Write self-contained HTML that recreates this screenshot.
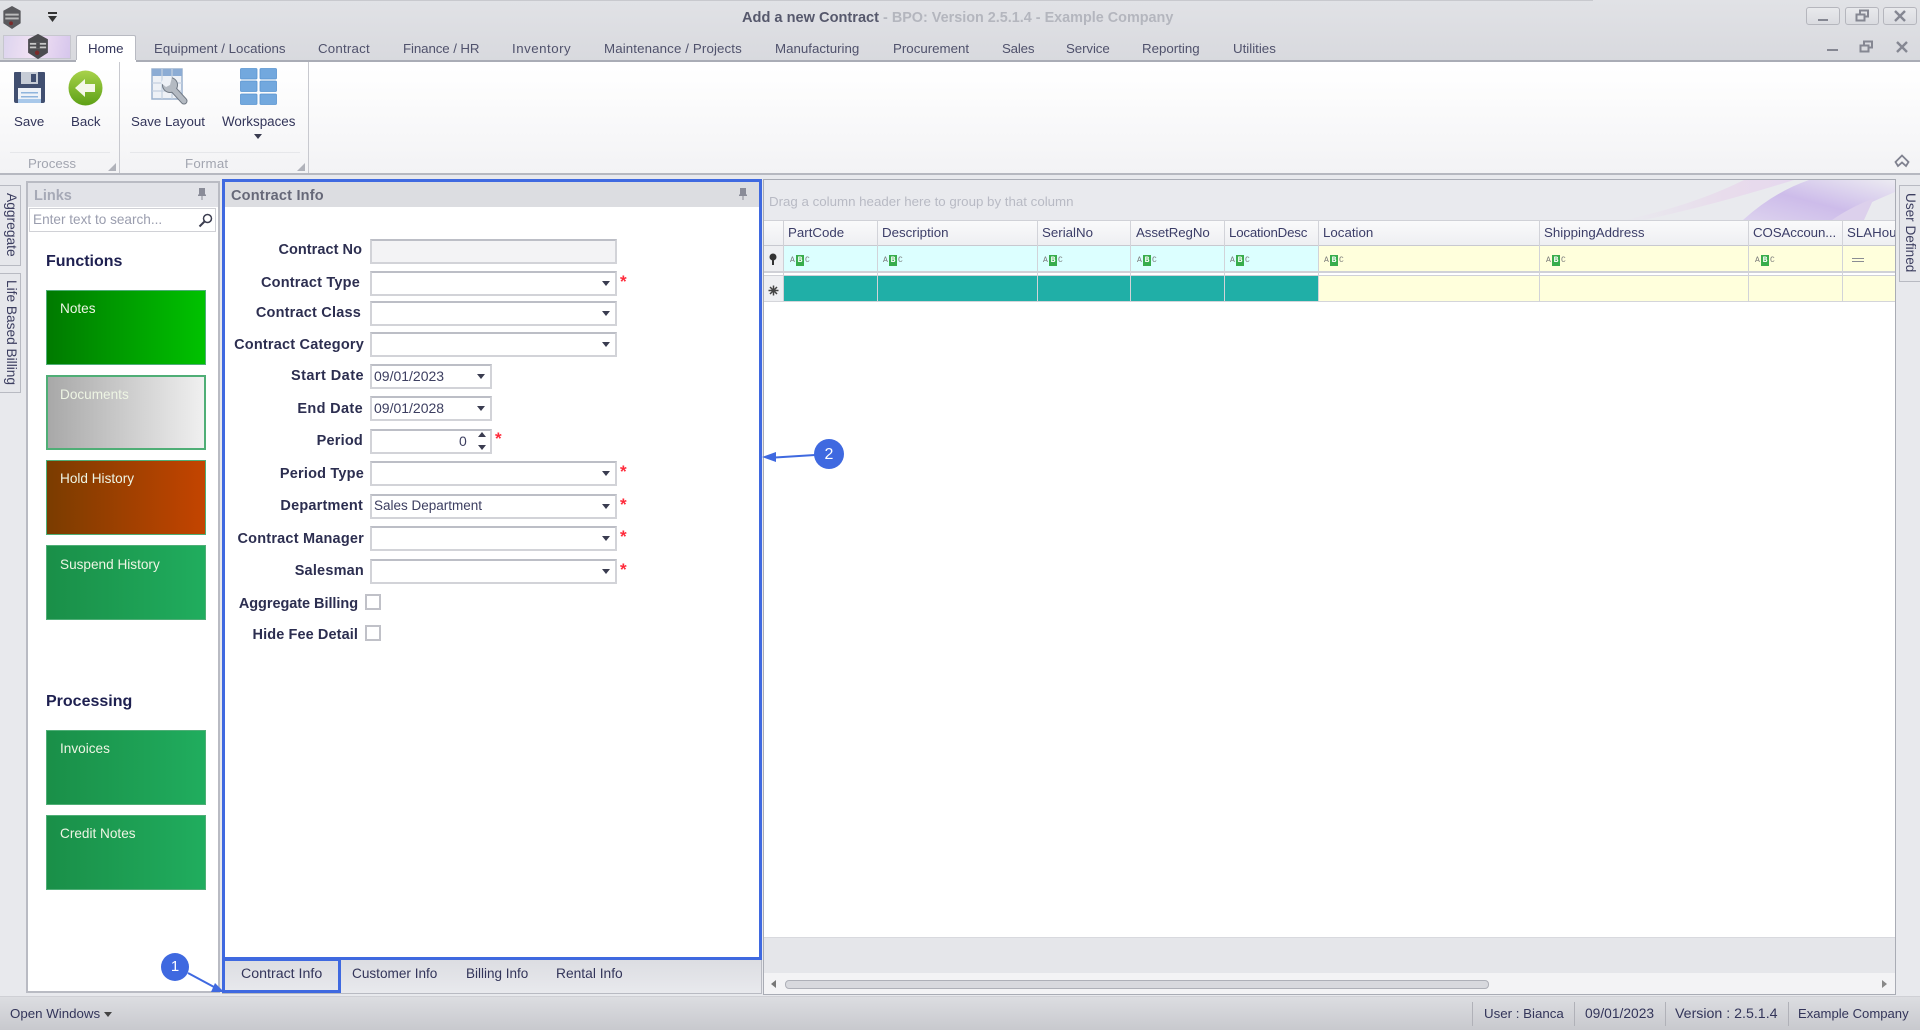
<!DOCTYPE html>
<html><head><meta charset="utf-8"><title>Add a new Contract</title>
<style>
html,body{margin:0;padding:0;width:1920px;height:1030px;overflow:hidden;background:#e8e9ed}
#r{position:absolute;left:0;top:0;width:1920px;height:1030px;overflow:hidden;font-family:"Liberation Sans",sans-serif;font-size:13.3px;color:#33355a;filter:blur(.35px);background:#e8e9ed}
#r div,#r span.t,#r svg{position:absolute}
.t{position:absolute;white-space:nowrap;line-height:16px;height:16px}
.tab{color:#50526c}
.l{font-weight:bold;font-size:14.5px;letter-spacing:.2px;color:#2c2e50;text-align:right;width:160px;left:203px}
.i{box-sizing:border-box;background:#fff;border:2px solid #d2d3d8;border-top-color:#bcbec6;left:370px;width:247px;height:25px}
.d{left:370px;width:122px}
.ar{width:0;height:0;border-left:4.5px solid transparent;border-right:4.5px solid transparent;border-top:5px solid #3a3c50}
.st{color:#ff2a3a;font-weight:bold;font-size:17px}
.v{font-size:14px;color:#3c3e60}
.tile{box-sizing:border-box;left:46px;width:160px;border:1px solid #4fae76}
.tt{color:#eef5e4;font-size:13.6px;left:60px}
.h{color:#3c3e68;top:225px}
.hd{top:220px;height:26px;width:1px;background:#cfd0d6}
.vl{width:1px;background:#cfd0d6}
.abc{top:255px;height:11px;width:26px}
.abc b{position:absolute;left:6px;top:0;width:8px;height:11px;background:#38ad4c;color:#fff;font:bold 8px/11px "Liberation Mono",monospace;text-align:center}
.abc i{position:absolute;top:1px;font:normal 8px/9px "Liberation Mono",monospace;color:#777}
.sep{top:1002px;width:1px;height:24px;background:#b0b1b8}
.wb{box-sizing:border-box;top:7px;height:18px;border:1px solid #b5b6bd;border-radius:3px;background:linear-gradient(#e8e9ec,#dadbe0)}
</style></head><body><div id="r">

<!-- title bar -->
<div style="left:0;top:0;width:1920px;height:61px;background:linear-gradient(#e1e2e6,#d8d9de)"></div>
<div style="left:0;top:0;width:1593px;height:1px;background:#c8c9ce"></div>
<svg style="left:1px;top:5px" width="22" height="25" viewBox="0 0 22 26"><polygon points="11,1 20,6 20,19 11,25 2,19 2,6" fill="#5a5a5e"/><rect x="4" y="9" width="14" height="2" fill="#bbb"/><rect x="4" y="13" width="14" height="2" fill="#bbb"/><circle cx="10" cy="19" r="2" fill="#7a2a2a"/></svg>
<svg style="left:47px;top:12px" width="12" height="11" viewBox="0 0 12 11"><rect x="1" y="0" width="9" height="2" fill="#333"/><polygon points="1,4 10,4 5.5,10" fill="#333"/></svg>
<span class="t" style="left:742px;top:10px;font-weight:bold;font-size:14.6px;color:#56586c">Add a new Contract<span style="color:#b4b6be;font-size:14.4px"> - BPO: Version 2.5.1.4 - Example Company</span></span>

<div class="wb" style="left:1806px;width:34px"></div><div style="left:1818px;top:19px;width:10px;height:2px;background:#858792"></div>
<div class="wb" style="left:1845px;width:34px"></div><svg style="left:1855px;top:9px" width="15" height="14" viewBox="0 0 15 14" fill="none" stroke="#858792" stroke-width="2"><rect x="5" y="1.5" width="8" height="6"/><rect x="1.5" y="5.5" width="8" height="6" fill="#e0e1e5"/></svg>
<div class="wb" style="left:1883px;width:34px"></div><svg style="left:1894px;top:10px" width="12" height="12" viewBox="0 0 12 12" stroke="#858792" stroke-width="2.4"><path d="M1 1L11 11M11 1L1 11"/></svg>

<div style="left:1827px;top:49px;width:11px;height:2px;background:#858792"></div>
<svg style="left:1859px;top:40px" width="15" height="14" viewBox="0 0 15 14" fill="none" stroke="#858792" stroke-width="2"><rect x="5" y="1.5" width="8" height="6"/><rect x="1.5" y="5.5" width="8" height="6" fill="#dadbdf"/></svg>
<svg style="left:1896px;top:41px" width="12" height="12" viewBox="0 0 12 12" stroke="#858792" stroke-width="2.4"><path d="M1 1L11 11M11 1L1 11"/></svg>

<!-- app button + tabs -->
<div style="left:3px;top:35px;width:68px;height:24px;background:linear-gradient(100deg,#dcd4ee,#f2e2f4 45%,#d6c6ec);border:1px solid #c6c7ce;box-sizing:border-box"></div>
<svg style="left:26px;top:33px" width="24" height="27" viewBox="0 0 26 30"><polygon points="13,1 24,7 24,22 13,29 2,22 2,7" fill="#4c4c50"/><rect x="4" y="11" width="18" height="2" fill="#c8c8c8"/><rect x="4" y="15" width="18" height="2" fill="#c8c8c8"/><rect x="11" y="11" width="4" height="6" fill="#4c4c50"/><circle cx="12" cy="22" r="2.5" fill="#7a2a2a"/></svg>
<div style="left:0;top:60px;width:1920px;height:2px;background:#aaadb6"></div>
<div style="left:76px;top:35px;width:60px;height:27px;background:#fff;border:1px solid #b8bac2;border-bottom:0;box-sizing:border-box;border-radius:2px 2px 0 0"></div>
<span class="t" style="left:88px;top:41px;color:#33355a">Home</span>
<span class="t tab" style="left:154px;top:41px">Equipment / Locations</span>
<span class="t tab" style="left:318px;top:41px;letter-spacing:.2px">Contract</span>
<span class="t tab" style="left:403px;top:41px;letter-spacing:-.1px">Finance / HR</span>
<span class="t tab" style="left:512px;top:41px;letter-spacing:.5px">Inventory</span>
<span class="t tab" style="left:604px;top:41px;letter-spacing:.12px">Maintenance / Projects</span>
<span class="t tab" style="left:775px;top:41px">Manufacturing</span>
<span class="t tab" style="left:893px;top:41px">Procurement</span>
<span class="t tab" style="left:1002px;top:41px;letter-spacing:-.2px">Sales</span>
<span class="t tab" style="left:1066px;top:41px;letter-spacing:-.1px">Service</span>
<span class="t tab" style="left:1142px;top:41px">Reporting</span>
<span class="t tab" style="left:1233px;top:41px">Utilities</span>

<!-- ribbon -->
<div style="left:0;top:62px;width:1920px;height:111px;background:linear-gradient(#fff 5%,#f3f3f5)"></div>
<div style="left:0;top:173px;width:1920px;height:2px;background:#b6b8c0"></div>
<div style="left:136px;top:60px;width:1784px;height:2px;background:#aaadb6"></div>
<div style="left:76px;top:60px;width:60px;height:3px;background:#fff"></div>
<div style="left:119px;top:62px;width:1px;height:111px;background:#c8c9cf"></div>
<div style="left:308px;top:62px;width:1px;height:111px;background:#c8c9cf"></div>
<div style="left:10px;top:152px;width:100px;height:1px;background:#e6e7ea"></div>
<div style="left:130px;top:152px;width:170px;height:1px;background:#e6e7ea"></div>
<span class="t" style="left:28px;top:156px;color:#a2a5b0">Process</span>
<span class="t" style="left:185px;top:156px;color:#a2a5b0;letter-spacing:.2px">Format</span>
<svg style="left:108px;top:163px" width="8" height="8"><polygon points="8,0 8,8 0,8" fill="#b0b2ba"/></svg>
<svg style="left:297px;top:163px" width="8" height="8"><polygon points="8,0 8,8 0,8" fill="#b0b2ba"/></svg>
<svg style="left:1894px;top:154px" width="16" height="14" viewBox="0 0 16 14" fill="none" stroke="#808290" stroke-width="1.8"><path d="M1.5 8L8 1.5L14.500 8L12 12L8 8.500L4 12Z"/></svg>

<!-- save icon -->
<svg style="left:13px;top:71px" width="33" height="33" viewBox="0 0 33 33"><path d="M1 2q0-1 1-1h29q1 0 1 1v28q0 2-2 2H3q-2 0-2-2z" fill="#414f70"/><rect x="8" y="1" width="17" height="12" fill="#c6ccd6"/><rect x="18" y="3" width="5" height="8" fill="#414f70"/><rect x="5" y="17" width="23" height="15" fill="#eef2f8"/><rect x="8" y="21" width="17" height="1.500" fill="#8fb4dc"/><rect x="8" y="25" width="17" height="1.500" fill="#8fb4dc"/><rect x="5" y="28" width="23" height="4" fill="#a8c8ea"/></svg>
<span class="t" style="left:14px;top:114px;font-size:13.3px">Save</span>
<!-- back icon -->
<svg style="left:68px;top:70px" width="35" height="36" viewBox="0 0 35 36"><defs><linearGradient id="g" x1="0" y1="0" x2="0" y2="1"><stop offset="0" stop-color="#a8d24a"/><stop offset="1" stop-color="#5da016"/></linearGradient></defs><ellipse cx="17.500" cy="18" rx="17" ry="17.500" fill="url(#g)"/><path d="M7 18L17 9v5h10v8H17v5z" fill="#f4f8e8"/></svg>
<span class="t" style="left:71px;top:114px;font-size:13.3px">Back</span>
<!-- save layout icon -->
<svg style="left:151px;top:68px" width="38" height="38" viewBox="0 0 38 38"><rect x="1" y="1" width="30" height="30" fill="#eef1f6" stroke="#9cb2ce" stroke-width="1.500"/><rect x="1" y="1" width="30" height="7" fill="#8cacd4"/><path d="M11 1v30M21 1v30M1 15h30M1 23h30" stroke="#c4d0e0" stroke-width="1.200"/>
<path d="M22 21L33 33" stroke="#6f7782" stroke-width="7" stroke-linecap="round"/><circle cx="19" cy="17" r="8" fill="#6f7782"/><path d="M22 21L33 33" stroke="#b4bac2" stroke-width="5" stroke-linecap="round"/><circle cx="19" cy="17" r="7" fill="#b4bac2"/><polygon points="13,9 21,9 19,17 15,19 10,15" fill="#eef1f6"/></svg>
<span class="t" style="left:131px;top:114px;font-size:13.3px">Save Layout</span>
<!-- workspaces icon -->
<svg style="left:240px;top:68px" width="37" height="37" viewBox="0 0 37 37"><g fill="#72a8de" stroke="#5a94d0" stroke-width=".8"><rect x=".5" y=".5" width="16.500" height="10.500" rx="1"/><rect x="20" y=".5" width="16.500" height="10.500" rx="1"/><rect x=".5" y="13" width="16.500" height="10.500" rx="1"/><rect x="20" y="13" width="16.500" height="10.500" rx="1"/><rect x=".5" y="26" width="16.500" height="10.500" rx="1"/><rect x="20" y="26" width="16.500" height="10.500" rx="1"/></g></svg>
<span class="t" style="left:222px;top:114px;font-size:13.4px">Workspaces</span>
<div class="ar" style="left:254px;top:134px"></div>

<!-- left side tabs -->
<div style="box-sizing:border-box;left:0;top:185px;width:21px;height:81px;border:1px solid #b8bac2;border-left:0;background:#e6e7eb"></div>
<div style="box-sizing:border-box;left:0;top:273px;width:21px;height:120px;border:1px solid #b8bac2;border-left:0;background:#e6e7eb"></div>
<span class="t" style="left:3px;top:193px;writing-mode:vertical-rl;height:auto;width:16px;color:#3c3e60;font-size:13.8px">Aggregate</span>
<span class="t" style="left:3px;top:280px;writing-mode:vertical-rl;height:auto;width:16px;color:#3c3e60;font-size:13.7px">Life Based Billing</span>

<!-- links panel -->
<div style="box-sizing:border-box;left:26px;top:181px;width:194px;height:812px;background:#fff;border:2px solid #b9bbc3"></div>
<div style="left:28px;top:183px;width:190px;height:24px;background:#e2e3e8"></div>
<span class="t" style="left:34px;top:188px;font-weight:bold;font-size:14.500px;color:#a6a9b6">Links</span>
<svg style="left:197px;top:187px" width="10" height="14" viewBox="0 0 10 14"><path d="M2 1h6v6l1 1v1H1V8l1-1z M4.500 9h1v4h-1z" fill="#8a8c98"/></svg>
<div style="box-sizing:border-box;left:29px;top:208px;width:187px;height:24px;background:#fff;border:1px solid #d0d1d6"></div>
<span class="t" style="left:33px;top:212px;font-size:13.600px;color:#9a9dae">Enter text to search...</span>
<svg style="left:198px;top:213px" width="15" height="15" viewBox="0 0 15 15" fill="none" stroke="#3c3e50" stroke-width="1.500"><circle cx="9.500" cy="5.500" r="4"/><path d="M6.500 8.500L1.500 13.500" stroke-width="2"/></svg>
<span class="t" style="left:46px;top:254px;font-weight:bold;font-size:16px;color:#1e2050">Functions</span>
<div class="tile" style="top:290px;height:75px;background:linear-gradient(90deg,#007a00,#00c200)"></div>
<span class="t tt" style="top:301px">Notes</span>
<div class="tile" style="top:375px;height:75px;border-width:2px;background:linear-gradient(90deg,#a8a8a8,#f0f0f0)"></div>
<span class="t tt" style="top:387px">Documents</span>
<div class="tile" style="top:460px;height:75px;background:linear-gradient(90deg,#7a3c00,#c44400)"></div>
<span class="t tt" style="top:471px">Hold History</span>
<div class="tile" style="top:545px;height:75px;background:linear-gradient(90deg,#1a8f48,#20ad5e)"></div>
<span class="t tt" style="top:557px">Suspend History</span>
<span class="t" style="left:46px;top:694px;font-weight:bold;font-size:16px;color:#1e2050">Processing</span>
<div class="tile" style="top:730px;height:75px;background:linear-gradient(90deg,#1a8f48,#20ad5e)"></div>
<span class="t tt" style="top:741px">Invoices</span>
<div class="tile" style="top:815px;height:75px;background:linear-gradient(90deg,#1a8f48,#20ad5e)"></div>
<span class="t tt" style="top:826px">Credit Notes</span>

<!-- contract panel -->
<div style="box-sizing:border-box;left:222px;top:179px;width:540px;height:815px;background:#fff"></div>
<div style="left:225px;top:182px;width:534px;height:25px;background:#dcdde1"></div>
<span class="t" style="left:231px;top:188px;font-weight:bold;font-size:14.500px;letter-spacing:.2px;color:#666878">Contract Info</span>
<svg style="left:738px;top:187px" width="10" height="14" viewBox="0 0 10 14"><path d="M2 1h6v6l1 1v1H1V8l1-1z M4.500 9h1v4h-1z" fill="#8a8c98"/></svg>

<span class="t l" style="top:242px;left:202px;letter-spacing:.05px">Contract No</span><div class="i" style="top:239px;background:#f3f3f5"></div>
<span class="t l" style="top:275px;left:200px">Contract Type</span><div class="i" style="top:271px"></div><div class="ar" style="left:602px;top:281px"></div><span class="t st" style="left:620px;top:274px">*</span>
<span class="t l" style="top:305px;left:201px">Contract Class</span><div class="i" style="top:301px"></div><div class="ar" style="left:602px;top:311px"></div>
<span class="t l" style="top:337px;left:204px">Contract Category</span><div class="i" style="top:332px"></div><div class="ar" style="left:602px;top:342px"></div>
<span class="t l" style="top:368px;left:204px;letter-spacing:.45px">Start Date</span><div class="i d" style="top:364px"></div><span class="t v" style="left:374px;top:368px">09/01/2023</span><div class="ar" style="left:477px;top:374px"></div>
<span class="t l" style="top:401px;left:203px;letter-spacing:.35px">End Date</span><div class="i d" style="top:396px"></div><span class="t v" style="left:374px;top:400px">09/01/2028</span><div class="ar" style="left:477px;top:406px"></div>
<span class="t l" style="top:433px;left:203px">Period</span><div class="i d" style="top:429px"></div><span class="t v" style="left:459px;top:433px">0</span>
<svg style="left:477px;top:431px" width="10" height="20"><polygon points="5,1 9,6 1,6" fill="#3a3c50"/><polygon points="5,19 9,14 1,14" fill="#3a3c50"/></svg><span class="t st" style="left:495px;top:431px">*</span>
<span class="t l" style="top:466px;left:204px">Period Type</span><div class="i" style="top:461px"></div><div class="ar" style="left:602px;top:471px"></div><span class="t st" style="left:620px;top:464px">*</span>
<span class="t l" style="top:498px;left:203px">Department</span><div class="i" style="top:494px"></div><span class="t v" style="left:374px;top:498px;font-size:13.500px">Sales Department</span><div class="ar" style="left:602px;top:504px"></div><span class="t st" style="left:620px;top:497px">*</span>
<span class="t l" style="top:531px;left:204px">Contract Manager</span><div class="i" style="top:526px"></div><div class="ar" style="left:602px;top:536px"></div><span class="t st" style="left:620px;top:529px">*</span>
<span class="t l" style="top:563px;left:204px">Salesman</span><div class="i" style="top:559px"></div><div class="ar" style="left:602px;top:569px"></div><span class="t st" style="left:620px;top:562px">*</span>
<span class="t l" style="top:596px;left:198px;letter-spacing:-.05px">Aggregate Billing</span><div class="i" style="left:365px;top:594px;width:16px;height:16px;border-color:#c0c1c8"></div>
<span class="t l" style="top:627px;left:198px;letter-spacing:.1px">Hide Fee Detail</span><div class="i" style="left:365px;top:625px;width:16px;height:16px;border-color:#c0c1c8"></div>

<div style="left:222px;top:960px;width:540px;height:33px;background:linear-gradient(#dcdde2,#e8e9ed)"></div>
<span class="t" style="left:241px;top:966px;font-size:14.2px">Contract Info</span>
<span class="t" style="left:352px;top:966px;font-size:13.6px">Customer Info</span>
<span class="t" style="left:466px;top:966px;font-size:13.5px">Billing Info</span>
<span class="t" style="left:556px;top:966px;font-size:13.8px">Rental Info</span>
<div style="left:761px;top:960px;width:1px;height:33px;background:#b8bac2"></div>
<div style="left:222px;top:993px;width:540px;height:1px;background:#b8bac2"></div>

<!-- grid -->
<div style="box-sizing:border-box;left:763px;top:179px;width:1133px;height:816px;background:#fff;border:1px solid #a9acb5"></div>
<div style="left:764px;top:180px;width:1131px;height:40px;background:#e9eaee;overflow:hidden">
<svg style="left:0;top:0" width="1131" height="40"><defs><linearGradient id="p" x1="0" y1="0" x2="1" y2="0"><stop offset="0" stop-color="#e9eaee"/><stop offset=".6" stop-color="#e8dcec"/><stop offset="1" stop-color="#e6d8ee"/></linearGradient><linearGradient id="q" x1="0" y1="1" x2="1" y2="0"><stop offset="0" stop-color="#dcd2ee"/><stop offset=".45" stop-color="#cdbcea"/><stop offset="1" stop-color="#ecebf2"/></linearGradient></defs>
<path d="M880 40Q950 25 1030 0H980Q930 25 860 40Z" fill="url(#p)"/><path d="M979 40Q1010 12 1045 0H1131V12Q1100 25 1070 40Z" fill="url(#q)"/><path d="M1068 40Q1085 28 1110 18L1100 40Z" fill="#dcd0ec"/></svg></div>
<span class="t" style="left:769px;top:194px;color:#b8bac4;font-size:13.300px">Drag a column header here to group by that column</span>

<div style="left:764px;top:220px;width:1131px;height:26px;background:linear-gradient(#fafafb,#eeeff2);border-top:1px solid #d0d1d7;box-sizing:border-box;border-bottom:1px solid #c8c9d0"></div>
<div style="left:764px;top:246px;width:19px;height:56px;background:#eeeff2"></div>
<span class="t h" style="left:788px">PartCode</span>
<span class="t h" style="left:882px">Description</span>
<span class="t h" style="left:1042px">SerialNo</span>
<span class="t h" style="left:1136px;letter-spacing:-.1px">AssetRegNo</span>
<span class="t h" style="left:1229px;letter-spacing:-.2px">LocationDesc</span>
<span class="t h" style="left:1323px">Location</span>
<span class="t h" style="left:1544px">ShippingAddress</span>
<span class="t h" style="left:1753px;letter-spacing:-.1px">COSAccoun...</span>
<div style="left:1847px;top:225px;width:48px;height:16px;overflow:hidden;white-space:nowrap;line-height:16px;color:#3c3e68">SLAHours</div>

<div style="left:783px;top:246px;width:535px;height:26px;background:#dcffff"></div>
<div style="left:1318px;top:246px;width:577px;height:26px;background:#ffffdc"></div>
<div style="left:764px;top:271px;width:1131px;height:5px;background:#fff;border-top:2px solid #d0d1d7;border-bottom:1px solid #d0d1d7;box-sizing:border-box"></div>
<div style="left:783px;top:276px;width:535px;height:25px;background:#20afa7"></div>
<div style="left:1318px;top:276px;width:577px;height:25px;background:#ffffdc"></div>
<div style="left:764px;top:301px;width:1131px;height:1px;background:#d4d5da"></div>
<div class="vl" style="left:783px;top:220px;height:82px"></div>
<div class="vl" style="left:877px;top:220px;height:82px;background:#d2d3d9"></div>
<div class="vl" style="left:1037px;top:220px;height:82px;background:#d2d3d9"></div>
<div class="vl" style="left:1130px;top:220px;height:82px;background:#d2d3d9"></div>
<div class="vl" style="left:1224px;top:220px;height:82px;background:#d2d3d9"></div>
<div class="vl" style="left:1318px;top:220px;height:82px;background:#d2d3d9"></div>
<div class="vl" style="left:1539px;top:220px;height:82px;background:#d2d3d9"></div>
<div class="vl" style="left:1748px;top:220px;height:82px;background:#d2d3d9"></div>
<div class="vl" style="left:1842px;top:220px;height:82px;background:#d2d3d9"></div>

<svg style="left:768px;top:253px" width="10" height="13" viewBox="0 0 10 13"><circle cx="5" cy="4" r="3.500" fill="#333"/><rect x="4" y="6" width="2" height="6" fill="#333"/></svg>
<svg style="left:768px;top:285px" width="11" height="11" viewBox="0 0 11 11" stroke="#444" stroke-width="1.500"><path d="M5.500 .5v10M.5 5.500h10M2 2l7 7M9 2l-7 7"/></svg>

<div class="abc" style="left:790px"><i style="left:0">A</i><b>B</b><i style="left:15px">C</i></div>
<div class="abc" style="left:883px"><i style="left:0">A</i><b>B</b><i style="left:15px">C</i></div>
<div class="abc" style="left:1043px"><i style="left:0">A</i><b>B</b><i style="left:15px">C</i></div>
<div class="abc" style="left:1137px"><i style="left:0">A</i><b>B</b><i style="left:15px">C</i></div>
<div class="abc" style="left:1230px"><i style="left:0">A</i><b>B</b><i style="left:15px">C</i></div>
<div class="abc" style="left:1324px"><i style="left:0">A</i><b>B</b><i style="left:15px">C</i></div>
<div class="abc" style="left:1546px"><i style="left:0">A</i><b>B</b><i style="left:15px">C</i></div>
<div class="abc" style="left:1755px"><i style="left:0">A</i><b>B</b><i style="left:15px">C</i></div>
<div style="left:1852px;top:258px;width:12px;height:1px;background:#8a8c94"></div>
<div style="left:1852px;top:261px;width:12px;height:1px;background:#8a8c94"></div>

<div style="left:764px;top:937px;width:1131px;height:36px;background:#e5e6ea;border-top:1px solid #d8d9de;box-sizing:border-box"></div>
<div style="left:764px;top:973px;width:1131px;height:21px;background:#f3f3f5"></div>
<div style="box-sizing:border-box;left:785px;top:980px;width:704px;height:9px;background:#d8d9de;border:1px solid #aeb0b8;border-radius:4px"></div>
<svg style="left:771px;top:980px" width="5" height="8"><polygon points="5,0 5,8 0,4" fill="#777"/></svg>
<svg style="left:1882px;top:980px" width="5" height="8"><polygon points="0,0 0,8 5,4" fill="#888"/></svg>

<!-- right side tab -->
<div style="box-sizing:border-box;left:1899px;top:185px;width:21px;height:97px;border:1px solid #b8bac2;border-right:0;background:#e6e7eb"></div>
<span class="t" style="left:1902px;top:193px;writing-mode:vertical-rl;height:auto;width:16px;color:#3c3e60;font-size:13.6px">User Defined</span>

<!-- status bar -->
<div style="left:0;top:996px;width:1920px;height:34px;background:linear-gradient(#dcdde1,#c8c9ce);border-top:1px solid #cfd0d5;box-sizing:border-box"></div>
<span class="t" style="left:10px;top:1006px;font-size:13.300px">Open Windows</span>
<div class="ar" style="left:104px;top:1012px;border-top-color:#444"></div>
<div class="sep" style="left:1472px"></div>
<div class="sep" style="left:1574px"></div>
<div class="sep" style="left:1665px"></div>
<div class="sep" style="left:1788px"></div>
<span class="t" style="left:1484px;top:1006px;font-size:13.3px">User : Bianca</span>
<span class="t" style="left:1585px;top:1006px;font-size:13.800px">09/01/2023</span>
<span class="t" style="left:1675px;top:1006px;font-size:14.2px">Version : 2.5.1.4</span>
<span class="t" style="left:1798px;top:1006px;font-size:13.1px">Example Company</span>

<!-- annotations -->
<div style="box-sizing:border-box;left:222px;top:179px;width:540px;height:781px;border:3px solid #3f69e0"></div>
<div style="box-sizing:border-box;left:222px;top:958px;width:119px;height:35px;border:3px solid #3f69e0"></div>
<svg style="left:150px;top:440px;overflow:visible" width="720" height="560" viewBox="150 440 720 560">
<path d="M188 973L214 987" stroke="#3f69e0" stroke-width="2" fill="none"/><polygon points="224,992 211,992 215,983" fill="#3f69e0"/>
<path d="M815 455L775 457.500" stroke="#3f69e0" stroke-width="2" fill="none"/><polygon points="762,457 776,452 776,462" fill="#3f69e0"/>
<circle cx="175" cy="967" r="14" fill="#3f69e0"/><circle cx="829" cy="454" r="15" fill="#3f69e0"/></svg>
<span class="t" style="left:170px;top:959px;width:10px;text-align:center;color:#fff;font-size:15px">1</span>
<span class="t" style="left:824px;top:447px;width:10px;text-align:center;color:#fff;font-size:16px">2</span>
</div></body></html>
